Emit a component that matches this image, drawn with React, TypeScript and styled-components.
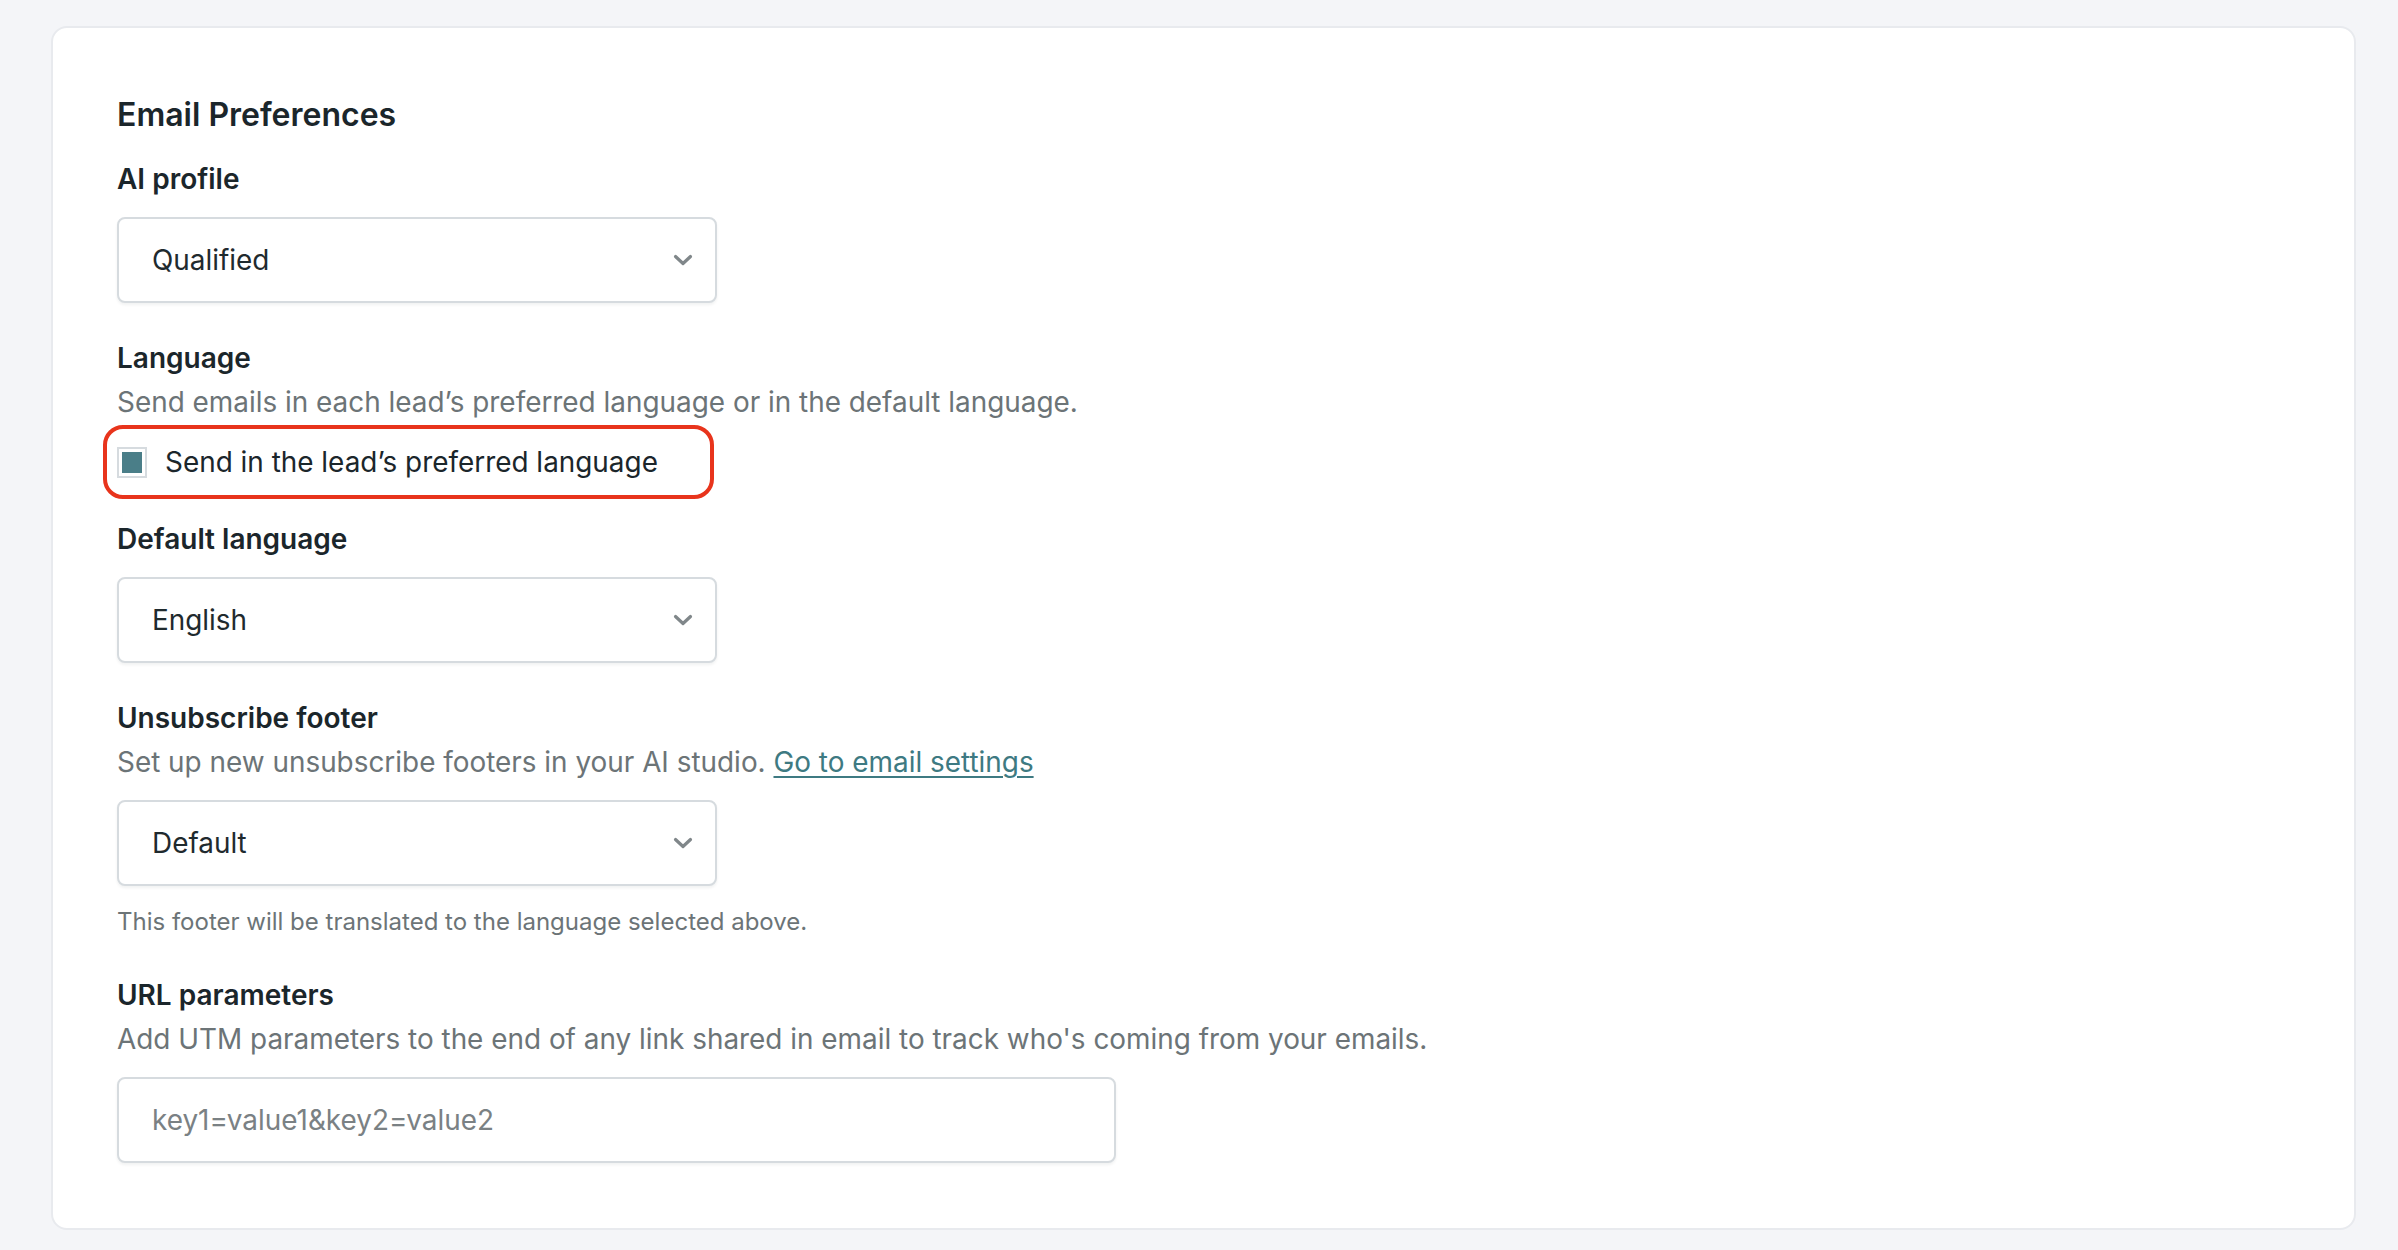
import React from 'react';
import styled, { createGlobalStyle } from 'styled-components';

const GlobalStyle = createGlobalStyle`
  body {
    margin: 0;
    background: #f4f5f8;
    font-family: Inter, "Noto Sans", "Liberation Sans", sans-serif;
    color: #1b262b;
  }
`;

const Page = styled.div`
  padding: 26px 42px 22px 51px;
`;

const Card = styled.section`
  background: #ffffff;
  border: 2px solid #e8eaee;
  border-radius: 16px;
  padding: 67px 64px 65px;
`;

const Title = styled.h2`
  margin: 0 0 19px;
  font-size: 32px;
  line-height: 40px;
  font-weight: 600;
  color: #1b262b;
`;

const Field = styled.div<{ $first?: boolean }>`
  display: flex;
  flex-direction: column;
  align-items: flex-start;
  margin-top: ${(p) => (p.$first ? '0' : '30px')};
`;

const Label = styled.div`
  padding-top: 4px;
  margin-bottom: 2px;
  font-size: 28px;
  line-height: 42px;
  font-weight: 600;
  color: #1b262b;
`;

const Hint = styled.div`
  margin-bottom: 2px;
  font-size: 27.9px;
  line-height: 42px;
  color: #6c7477;
`;

const Link = styled.a`
  color: #3e7a82;
  text-decoration: underline;
  text-underline-offset: 4px;
  text-decoration-thickness: 2px;
  cursor: pointer;
`;

const Control = styled.div<{ $width: number }>`
  box-sizing: border-box;
  width: ${(p) => p.$width}px;
  height: 86px;
  margin-top: 15px;
  display: flex;
  align-items: center;
  justify-content: space-between;
  padding: 0 22px 0 33px;
  border: 2px solid #d6dbdf;
  border-radius: 8px;
  background: #fff;
  box-shadow: 0 2px 3px rgba(20, 30, 40, 0.06);
  font-size: 27.9px;
  color: #1f2a2e;
`;

const TextInput = styled.input`
  flex: 1;
  border: 0;
  outline: none;
  padding: 0;
  font: inherit;
  color: #1f2a2e;
  background: transparent;

  &::placeholder {
    color: #7a8184;
  }
`;

const Note = styled.div`
  margin: 18px 0 0;
  font-size: 24px;
  line-height: 36px;
  color: #6c7477;
`;

/* red ring drawn round the language checkbox */
const Highlight = styled.div`
  box-sizing: border-box;
  width: 611px;
  margin: 0 0 -15px -14px;
  padding: 0 10px;
  height: 74px;
  border: 4px solid #e8341c;
  border-radius: 20px;
  display: flex;
  align-items: center;
`;

const CheckLabel = styled.label`
  display: flex;
  align-items: center;
  gap: 18px;
  font-size: 27.9px;
  line-height: 42px;
  color: #1b262b;
  cursor: pointer;
`;

const Box = styled.span`
  box-sizing: border-box;
  width: 30px;
  height: 31px;
  padding: 3px;
  border: 2px solid #d6dbdf;
  display: flex;

  &::after {
    content: '';
    flex: 1;
    background: #4a7e88;
  }
`;

const Chevron = () => (
  <svg width="20" height="12" viewBox="0 0 20 12" fill="none">
    <path d="M2.5 2.5 L10 9.5 L17.5 2.5" stroke="#80878a" strokeWidth="3.2" strokeLinecap="round" strokeLinejoin="round" />
  </svg>
);

const Select = ({ value }: { value: string }) => (
  <Control $width={600}>
    <span>{value}</span>
    <Chevron />
  </Control>
);

export default function App() {
  return (
    <Page>
      <GlobalStyle />
      <Card>
        <Title>Email Preferences</Title>

        <Field $first>
          <Label>AI profile</Label>
          <Select value="Qualified" />
        </Field>

        <Field>
          <Label>Language</Label>
          <Hint>Send emails in each lead’s preferred language or in the default language.</Hint>
          <Highlight>
            <CheckLabel>
              <Box />
              Send in the lead’s preferred language
            </CheckLabel>
          </Highlight>
        </Field>

        <Field>
          <Label>Default language</Label>
          <Select value="English" />
        </Field>

        <Field>
          <Label>Unsubscribe footer</Label>
          <Hint>
            Set up new unsubscribe footers in your AI studio. <Link>Go to email settings</Link>
          </Hint>
          <Select value="Default" />
          <Note>This footer will be translated to the language selected above.</Note>
        </Field>

        <Field>
          <Label>URL parameters</Label>
          <Hint>Add UTM parameters to the end of any link shared in email to track who's coming from your emails.</Hint>
          <Control $width={999}>
            <TextInput placeholder="key1=value1&key2=value2" />
          </Control>
        </Field>
      </Card>
    </Page>
  );
}
